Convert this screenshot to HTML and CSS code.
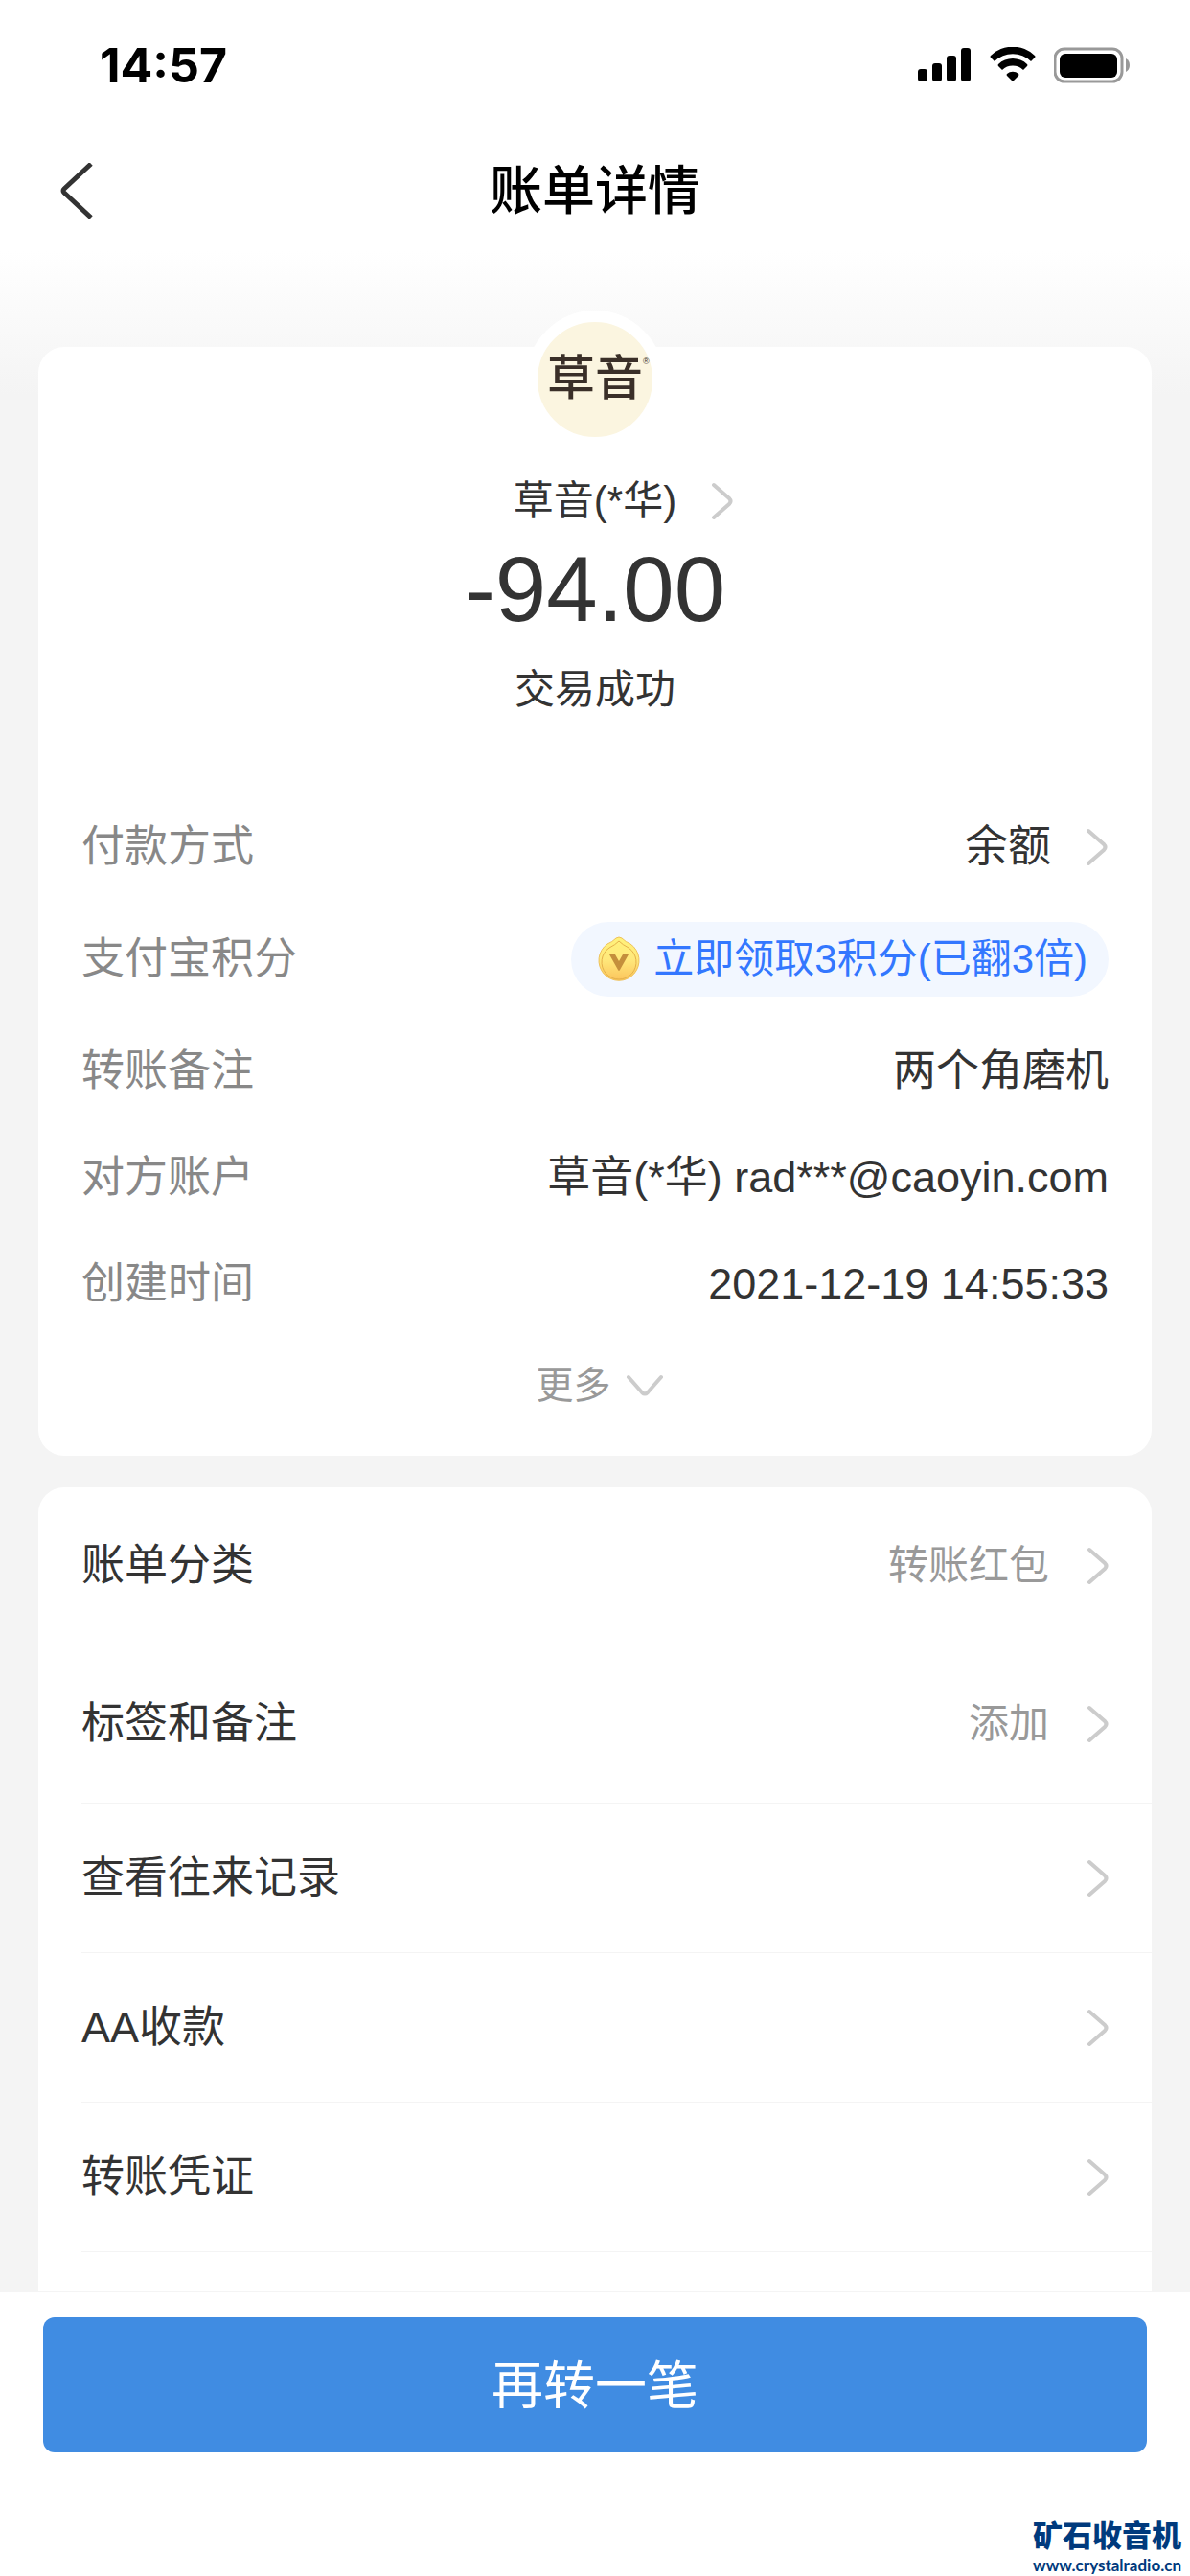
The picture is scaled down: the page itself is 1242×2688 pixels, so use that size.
FILE: index.html
```
<!DOCTYPE html>
<html lang="zh-CN">
<head>
    <meta charset="UTF-8">
    <meta name="viewport" content="width=device-width, initial-scale=1.0">
    <title>账单详情</title>
    <link rel="stylesheet" href="styles.css">
</head>
<body>

<svg class="defs" aria-hidden="true">
    <symbol id="arrow" viewBox="0 0 24 40">
        <path d="M3 3 L19 17 Q22 20 19 23 L3 37" fill="none" stroke="#ccc" stroke-width="4" stroke-linecap="round"/>
    </symbol>
</svg>

<div class="status-bar">
    <span class="time">14:57</span>
    <div class="status-icons">
        <svg width="56" height="38" viewBox="0 0 56 38">
            <rect x="0" y="23" width="10" height="13" rx="3"/>
            <rect x="15" y="17" width="10" height="19" rx="3"/>
            <rect x="30" y="9" width="10" height="27" rx="3"/>
            <rect x="45" y="1" width="10" height="35" rx="3"/>
        </svg>
        <svg width="48" height="38" viewBox="0 0 48 38">
            <path d="M5 15 A27 27 0 0 1 43 15 L47 11 Q48 10 47 9 A33 33 0 0 0 1 9 Q0 10 1 11 Z"/>
            <path d="M13 24 A16 16 0 0 1 35 24 L39 20 Q40 19 39 18 A22 22 0 0 0 9 18 Q8 19 9 20 Z"/>
            <path d="M24 36 L18 30 Q17 29 18 28 A9 9 0 0 1 30 28 Q31 29 30 30 Z"/>
        </svg>
        <svg width="80" height="38" viewBox="0 0 80 38">
            <rect x="1" y="2" width="70" height="34" rx="10" fill="none" stroke="#999" stroke-width="3"/>
            <rect x="6" y="7" width="60" height="25" rx="6"/>
            <path d="M75 12 Q79 14 79 19 Q79 24 75 26 Z" fill="#999"/>
        </svg>
    </div>
</div>

<header class="nav">
    <a class="back" href="#" aria-label="返回">
        <svg width="36" height="58" viewBox="0 0 36 58">
            <path d="M34 1 L6 27 Q4 29 6 31 L34 57" fill="none" stroke="#333" stroke-width="5"/>
        </svg>
    </a>
    <h1>账单详情</h1>
</header>

<main>
    <section class="card bill">
        <div class="avatar"><span>草音</span><sup>®</sup></div>
        <a class="payee" href="#">
            <span class="payee-name">草音(*华)</span>
            <svg class="arrow"><use href="#arrow"/></svg>
        </a>
        <p class="amount">-94.00</p>
        <p class="state">交易成功</p>

        <dl class="details">
            <div class="row">
                <dt>付款方式</dt>
                <dd><a class="link" href="#">余额 <svg class="arrow"><use href="#arrow"/></svg></a></dd>
            </div>
            <div class="row">
                <dt>支付宝积分</dt>
                <dd>
                    <button class="points" type="button">
                        <svg width="44" height="48" viewBox="0 0 44 48">
                            <defs>
                                <linearGradient id="gold" x1="0" y1="0" x2="0" y2="1">
                                    <stop offset="0" stop-color="#fff27a"/>
                                    <stop offset="0.5" stop-color="#ffe97c"/>
                                    <stop offset="1" stop-color="#fbc45c"/>
                                </linearGradient>
                            </defs>
                            <path d="M19 2 Q22 0 25 2 Q29 6 34 8 A21 21 0 1 1 10 8 Q15 6 19 2 Z" fill="url(#gold)" stroke="#efc25a" stroke-width="1"/>
                            <path d="M22 5 Q26 9 32 12 A18 18 0 1 1 12 12 Q18 9 22 5 Z" fill="none" stroke="#e5b04a" stroke-width="1"/>
                            <path d="M12 19 L18 19 L22 26 L26 19 L32 19 L23 35 Q22 37 21 35 Z" fill="#c48f3c"/>
                        </svg>
                        <span>立即领取3积分(已翻3倍)</span>
                    </button>
                </dd>
            </div>
            <div class="row">
                <dt>转账备注</dt>
                <dd>两个角磨机</dd>
            </div>
            <div class="row">
                <dt>对方账户</dt>
                <dd>草音(*华) rad***@caoyin.com</dd>
            </div>
            <div class="row">
                <dt>创建时间</dt>
                <dd>2021-12-19 14:55:33</dd>
            </div>
        </dl>

        <button class="more" type="button">
            更多
            <svg width="40" height="24" viewBox="0 0 40 24">
                <path d="M3 3 L17 19 Q20 22 23 19 L37 3" fill="none" stroke="#ccc" stroke-width="4" stroke-linecap="round"/>
            </svg>
        </button>
    </section>

    <ul class="card menu">
        <li class="tall"><a href="#">账单分类 <span class="hint">转账红包</span><svg class="arrow"><use href="#arrow"/></svg></a></li>
        <li class="tall"><a href="#">标签和备注 <span class="hint">添加</span><svg class="arrow"><use href="#arrow"/></svg></a></li>
        <li><a href="#">查看往来记录 <svg class="arrow"><use href="#arrow"/></svg></a></li>
        <li><a href="#">AA收款 <svg class="arrow"><use href="#arrow"/></svg></a></li>
        <li><a href="#">转账凭证 <svg class="arrow"><use href="#arrow"/></svg></a></li>
    </ul>
</main>

<footer>
    <button class="again" type="button">再转一笔</button>
    <div class="mark">
        <strong>矿石收音机</strong>
        <span>www.crystalradio.cn</span>
    </div>
</footer>

</body>
</html>
```
FILE: styles.css
```
* {
    box-sizing: border-box;
}
body {
    margin: 0;
    min-height: 100vh;
    display: flex;
    flex-direction: column;
    background-color: #fff;
    color: #333;
    font-family: "Liberation Sans", "Noto Sans CJK SC", sans-serif;
    font-size: 45px;
    line-height: 66px;
}
h1, p, ul, dl, dd {
    margin: 0;
    padding: 0;
}
a {
    color: inherit;
    text-decoration: none;
}
button {
    border: 0;
    padding: 0;
    font-family: inherit;
    cursor: pointer;
}
svg {
    display: block;
    flex: none;
}
.defs {
    position: absolute;
    width: 0;
    height: 0;
}
.arrow {
    width: 24px;
    height: 40px;
}

/* top bars */
.status-bar {
    display: flex;
    justify-content: space-between;
    align-items: center;
    height: 136px;
    padding: 0 62px 0 104px;
    color: #000;
}
.time {
    font-family: Inter, sans-serif;
    font-size: 50px;
    font-weight: 700;
}
.status-icons {
    display: flex;
    gap: 19px;
}
.nav {
    display: grid;
    grid-template-columns: 1fr auto 1fr;
    align-items: center;
    height: 126px;
    padding: 0 61px;
    color: #000;
}
.nav h1 {
    font-size: 55px;
    font-weight: 500;
}

/* cards */
main {
    flex: 1;
    display: flex;
    flex-direction: column;
    gap: 33px;
    padding: 100px 40px 0;
    background: linear-gradient(#fff, #f4f4f4 150px);
}
.card {
    background-color: #fff;
    border-radius: 27px;
}
.bill {
    display: flex;
    flex-direction: column;
    align-items: center;
    padding: 0 45px 40px;
}
.avatar {
    display: flex;
    justify-content: center;
    width: 144px;
    height: 144px;
    margin-top: -38px;
    padding-top: 26px;
    border: 12px solid #fff;
    border-radius: 50%;
    background-color: #fbf5e0;
    color: #3a2f28;
    font-size: 50px;
    font-weight: 500;
    white-space: nowrap;
}
.avatar sup {
    width: 0;
    font-size: 9px;
    line-height: 30px;
}
.payee {
    display: grid;
    grid-template-columns: 1fr auto 1fr;
    align-items: center;
    column-gap: 36px;
    width: 100%;
    margin-top: 22px;
    font-size: 42px;
}
.payee-name {
    grid-column: 2;
}
.amount {
    margin-top: 2px;
    font-size: 96px;
    line-height: 114px;
}
.state {
    margin-top: 15px;
    font-size: 42px;
}
.details {
    display: flex;
    flex-direction: column;
    gap: 45px;
    width: 100%;
    margin-top: 98px;
}
.row {
    display: flex;
    justify-content: space-between;
    align-items: center;
}
.row dt {
    color: #888;
}
.link {
    display: flex;
    align-items: center;
    gap: 36px;
}
.points {
    display: flex;
    align-items: center;
    gap: 14px;
    height: 78px;
    padding: 0 22px 0 28px;
    border-radius: 39px;
    background-color: #f2f7ff;
    color: #3377ff;
    font-size: 42px;
    line-height: 66px;
}
.more {
    display: flex;
    align-items: center;
    gap: 15px;
    margin-top: 40px;
    padding-left: 10px;
    background: none;
    color: #999;
    font-size: 39px;
    line-height: 66px;
}
.menu {
    flex: 1;
    padding-left: 45px;
    border-radius: 27px 27px 0 0;
    list-style: none;
}
.menu li {
    border-bottom: 1px solid #f4f4f4;
}
.menu a {
    display: flex;
    justify-content: space-between;
    align-items: center;
    height: 155px;
    padding-right: 44px;
}
.menu .tall a {
    height: 164px;
}
.hint {
    margin-left: auto;
    margin-right: 39px;
    color: #999;
    font-size: 42px;
}

/* bottom bar */
footer {
    display: flex;
    flex-direction: column;
    padding: 26px 45px 0;
    border-top: 1px solid #f4f4f4;
}
.again {
    height: 141px;
    padding-bottom: 6px;
    border-radius: 12px;
    background-color: #408ce2;
    color: #fff;
    font-size: 54px;
}
.mark {
    display: flex;
    flex-direction: column;
    align-self: flex-end;
    margin: 69px -36px 0 0;
    color: #003a7d;
}
.mark strong {
    font-size: 31px;
    font-weight: 900;
    line-height: 38px;
}
.mark span {
    font-family: Lato, sans-serif;
    font-size: 17px;
    font-weight: 700;
    line-height: 22px;
}
```
